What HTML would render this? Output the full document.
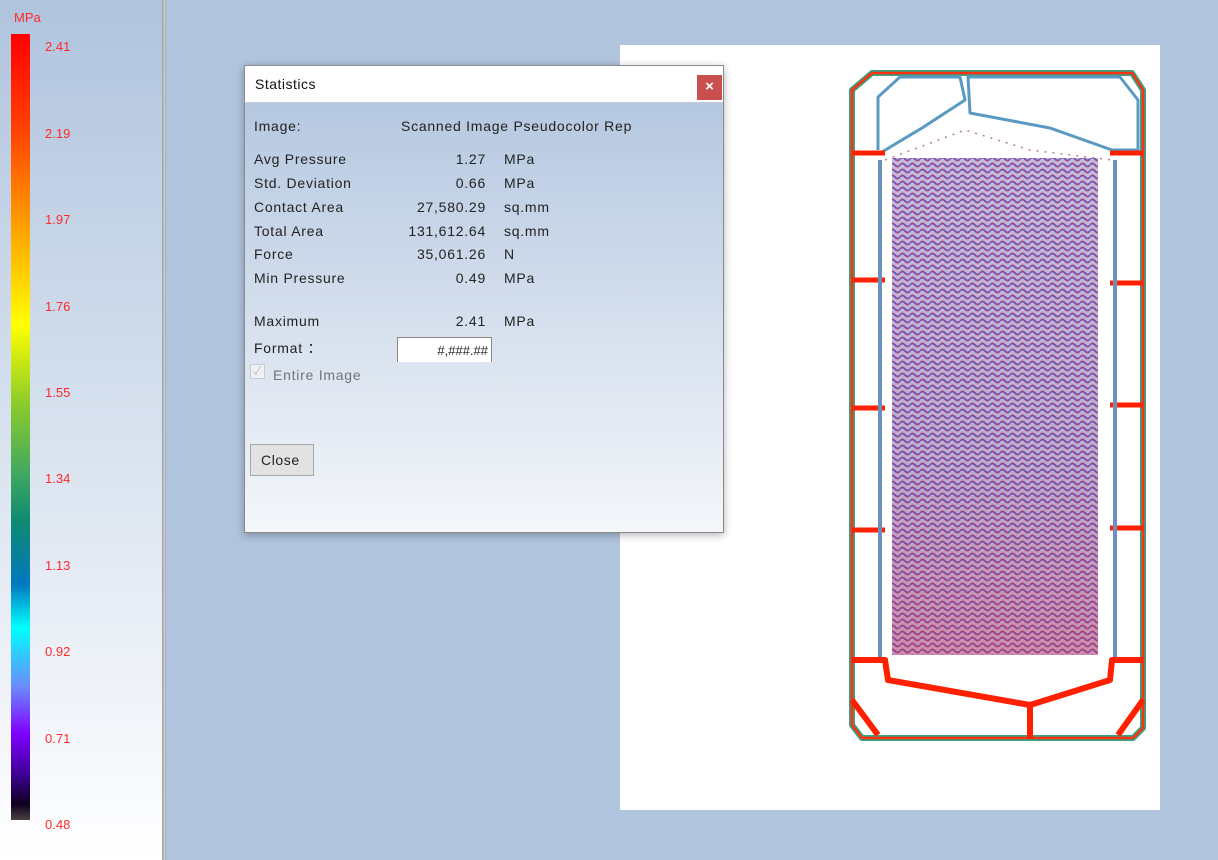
<!DOCTYPE html>
<html><head><meta charset="utf-8"><style>
*{margin:0;padding:0;box-sizing:border-box}
body{width:1218px;height:860px;overflow:hidden;background:#b0c4de;position:relative;font-family:"Liberation Sans","Noto Sans CJK SC",sans-serif}
#left{position:absolute;left:0;top:0;width:163px;height:860px;background:linear-gradient(#b0c4de,#ffffff);border-right:1px solid #9aa;}
#sep{position:absolute;left:163px;top:0;width:3px;height:860px;background:linear-gradient(90deg,#a8a8a8,#d8d8d8,#8e9aa8)}
#bar{position:absolute;left:11px;top:34px;width:19px;height:786px;background:linear-gradient(#ff0000 0%,#ff4400 12.6%,#ff9900 23.5%,#ffff00 37%,#8ccc2a 47%,#40a860 56%,#0f8a70 62%,#0078c0 70%,#00ffff 75.5%,#6a8cff 83%,#8000ff 89%,#40009a 94%,#100020 98%,#4a4040 100%)}
.lb{position:absolute;left:45px;color:#ff2a2a;font-size:13px}
#dlg{position:absolute;left:244px;top:65px;width:480px;height:468px;border:1px solid #8a8a8a;background:linear-gradient(#b0c4de 0%,#f4f6fa 100%);box-shadow:0 2px 8px rgba(0,0,0,.3)}
#tb{height:37px;background:#fff;border-bottom:1px solid #c4ccd8;position:relative}
#tb span{position:absolute;left:10px;top:10px;font-size:14px;color:#111;letter-spacing:.5px}
#x{position:absolute;right:1px;top:9px;width:25px;height:25px;background:#c9504f;color:#fff;font-size:15px;font-weight:bold;text-align:center;line-height:24px}
.t{position:absolute;font-size:14px;color:#222;white-space:nowrap;letter-spacing:.75px}
.v{position:absolute;font-size:14px;color:#222;text-align:right;width:120px;left:121px;letter-spacing:.75px}
</style></head><body>
<div id="left"></div><div id="sep"></div>
<div class="lb" style="left:14px;top:10px">MPa</div>
<div id="bar"></div>
<div class="lb" style="top:39px">2.41</div>
<div class="lb" style="top:126px">2.19</div>
<div class="lb" style="top:212px">1.97</div>
<div class="lb" style="top:299px">1.76</div>
<div class="lb" style="top:385px">1.55</div>
<div class="lb" style="top:471px">1.34</div>
<div class="lb" style="top:558px">1.13</div>
<div class="lb" style="top:644px">0.92</div>
<div class="lb" style="top:731px">0.71</div>
<div class="lb" style="top:817px">0.48</div>

<svg style="position:absolute;left:620px;top:45px" width="540" height="765" viewBox="620 45 540 765">
<defs>
<pattern id="w" width="10" height="6" patternUnits="userSpaceOnUse">
<rect width="10" height="6" fill="#e6e0ee"/>
<path d="M0 3 Q2.5 0 5 3 T10 3" fill="none" stroke="#6a50b8" stroke-width="1.8"/>
<circle cx="2.5" cy="1.5" r="1" fill="#e03020"/><circle cx="7.5" cy="4.5" r="1" fill="#e84030"/>
</pattern>
<linearGradient id="ov" x1="0" y1="0" x2="0" y2="1"><stop offset="0" stop-color="#7a60b8" stop-opacity=".3"/><stop offset=".6" stop-color="#7050a8" stop-opacity=".35"/><stop offset="1" stop-color="#b03a70" stop-opacity=".5"/></linearGradient>
</defs>
<rect x="620" y="45" width="540" height="765" fill="#fff"/>
<g fill="none" stroke-linejoin="round">
<path d="M872 73 H1132 L1143 90 V728 L1133 738 H862 L852 725 V90 Z" stroke="#3aa080" stroke-width="6"/>
<path d="M872 73 H1132 L1143 90 V728 L1133 738 H862 L852 725 V90 Z" stroke="#ff3010" stroke-width="2.5"/>
<path d="M878 150 V97 L900 77 H960 L965 100 L922 128 L882 152 M968 77 H1120 L1138 100 V150 H1112 L1050 128 L970 113 Z" stroke="#5a9ac0" stroke-width="3"/>
<path d="M852 153 H885 M852 280 H885 M852 408 H885 M852 530 H885 M1110 153 H1143 M1110 283 H1143 M1110 405 H1143 M1110 528 H1143" stroke="#ff2000" stroke-width="5"/>
<path d="M880 160 V660 M1115 160 V660" stroke="#6a90c0" stroke-width="4"/>
<path d="M852 660 H885 L888 680 L1030 705 L1110 680 L1112 660 H1143" stroke="#ff2000" stroke-width="6"/>
<path d="M1030 705 V738 M852 700 L878 735 M1143 700 L1118 735" stroke="#ff2000" stroke-width="6"/>
<path d="M885 160 L965 130 L1030 150 L1112 160" stroke="#b08090" stroke-width="1.5" stroke-dasharray="2 6"/>
</g>
<rect x="892" y="158" width="206" height="497" fill="url(#w)"/>
<rect x="892" y="158" width="206" height="497" fill="url(#ov)"/>
</svg>

<div id="dlg">
<div id="tb"><span>Statistics</span><div id="x">×</div></div>
<div class="t" style="left:9px;top:52px">Image:</div>
<div class="t" style="left:156px;top:52px">Scanned Image Pseudocolor Rep</div>
<div class="t" style="left:9px;top:85px">Avg Pressure</div><div class="v" style="top:85px">1.27</div><div class="t" style="left:259px;top:85px">MPa</div>
<div class="t" style="left:9px;top:109px">Std. Deviation</div><div class="v" style="top:109px">0.66</div><div class="t" style="left:259px;top:109px">MPa</div>
<div class="t" style="left:9px;top:133px">Contact Area</div><div class="v" style="top:133px">27,580.29</div><div class="t" style="left:259px;top:133px">sq.mm</div>
<div class="t" style="left:9px;top:157px">Total Area</div><div class="v" style="top:157px">131,612.64</div><div class="t" style="left:259px;top:157px">sq.mm</div>
<div class="t" style="left:9px;top:180px">Force</div><div class="v" style="top:180px">35,061.26</div><div class="t" style="left:259px;top:180px">N</div>
<div class="t" style="left:9px;top:204px">Min Pressure</div><div class="v" style="top:204px">0.49</div><div class="t" style="left:259px;top:204px">MPa</div>
<div class="t" style="left:9px;top:247px">Maximum</div><div class="v" style="top:247px">2.41</div><div class="t" style="left:259px;top:247px">MPa</div>
<div class="t" style="left:9px;top:272px">Format ：</div>
<div style="position:absolute;left:152px;top:271px;width:95px;height:25px;background:#fff;border:1px solid #888;border-bottom:none;text-align:right;padding-right:3px;font-size:13px;line-height:26px;color:#222">#,###.##</div>
<div style="position:absolute;left:5px;top:298px;width:15px;height:15px;border:1px solid #c8ccd0;background:#eef0f4;color:#b8bcc4;font-size:12px;line-height:13px;text-align:center">✓</div>
<div class="t" style="left:28px;top:301px;color:#707478">Entire Image</div>
<div style="position:absolute;left:5px;top:378px;width:64px;height:32px;background:#e2e2e2;border:1px solid #a8a8a8;font-size:14px;line-height:30px;padding-left:10px;color:#222;letter-spacing:.6px">Close</div>
</div>
</body></html>
